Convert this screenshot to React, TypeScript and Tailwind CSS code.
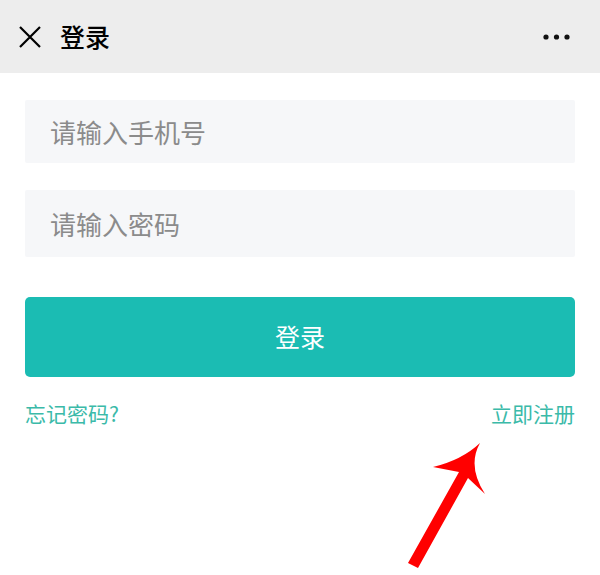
import React from "react";

const cjk = { fontFamily: '"Noto Sans CJK SC", "Noto Sans", sans-serif' };

const CloseIcon = () => (
    <svg width="24" height="24" viewBox="0 0 24 24" className="text-black">
        <path d="M2 2 L22 22 M22 2 L2 22" stroke="currentColor" strokeWidth="2.2" fill="none" />
    </svg>
);

const MoreIcon = () => (
    <svg width="30" height="8" viewBox="0 0 30 8">
        <circle cx="4" cy="4" r="2.6" fill="#111" />
        <circle cx="14.5" cy="4" r="2.6" fill="#111" />
        <circle cx="25" cy="4" r="2.6" fill="#111" />
    </svg>
);

const RedArrow = () => (
    <svg
        className="absolute left-0 top-0 pointer-events-none"
        width="600"
        height="575"
        viewBox="0 0 600 575"
    >
        <path
            d="M480 443 Q467 466 485 494 L468 478 L418 568 L408 563 L459 472 L433 467 Q462 460 480 443 Z"
            fill="#ff0000"
        />
    </svg>
);

export default function App() {
    return (
        <div className="relative w-[600px] h-[575px] bg-white overflow-hidden" style={cjk}>
            <header className="h-[73px] bg-[#ededed] flex items-center justify-between pl-[18px] pr-[28px]">
                <div className="flex items-center gap-[18px]">
                    <CloseIcon />
                    <span className="text-[25px] leading-none text-black font-medium">登录</span>
                </div>
                <MoreIcon />
            </header>

            <div className="px-[25px] pt-[27px] flex flex-col">
                <div className="h-[63px] bg-[#f6f7f9] rounded-[2px] flex items-center px-[25px]">
                    <span className="text-[26px] text-[#8b8b8b]">请输入手机号</span>
                </div>
                <div className="mt-[27px] h-[67px] bg-[#f6f7f9] rounded-[2px] flex items-center px-[25px]">
                    <span className="text-[26px] text-[#8b8b8b]">请输入密码</span>
                </div>

                <button className="mt-[40px] h-[80px] w-full rounded-[5px] bg-[#1bbcb3] flex items-center justify-center">
                    <span className="text-[25px] text-white">登录</span>
                </button>

                <div className="mt-[22px] flex items-center justify-between text-[21px] leading-[28px] text-[#3bbaa9]">
                    <span>忘记密码?</span>
                    <span>立即注册</span>
                </div>
            </div>

            <RedArrow />
        </div>
    );
}
